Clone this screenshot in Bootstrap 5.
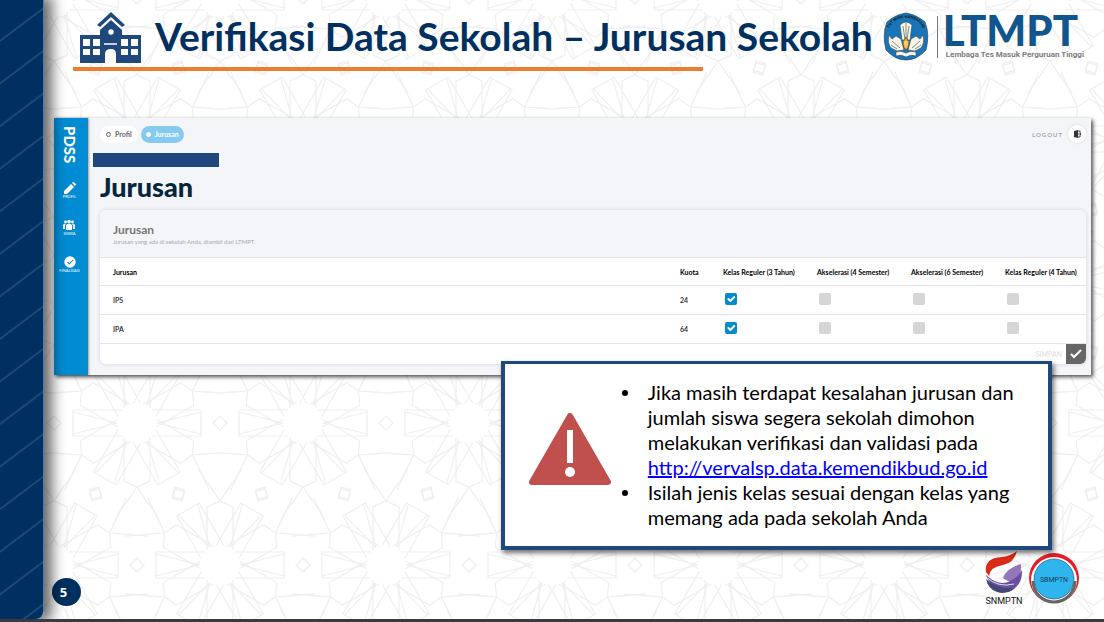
<!DOCTYPE html>
<html lang="id">
<head>
<meta charset="utf-8">
<meta name="viewport" content="width=device-width, initial-scale=1">
<title>Verifikasi Data Sekolah – Jurusan Sekolah</title>
<link href="https://cdn.jsdelivr.net/npm/bootstrap@5.3.0/dist/css/bootstrap.min.css" rel="stylesheet">
<style>
  :root { --navy: #003060; --frame: #1f497d; --sky: #008bd2; }
  body { font-family: Lato, "Open Sans", sans-serif; color: #000; background: #fff; }
  .deck { border-bottom: 3px solid #3b3b3f; }
  .ornament { z-index: 0; }
  .rail { width: 44px; z-index: 2; border-right: 1px solid #4f7fb8; border-bottom-right-radius: 8px;
    background: repeating-linear-gradient(143deg, #003060 0 31px, #23507f 33px, #003060 34px);
    box-shadow: 4px 0 14px 4px rgba(0,0,0,.6); }
  .slide-body { z-index: 1; min-width: 0; }
  .slide-head { height: 118px; padding: 0 20px 0 29px; }
  .title-rule { width: 630px; max-width: 100%; height: 4px; background: #ed7d31; }
  .title-row { height: 67px; padding-left: 7px; }
  .slide-title { font-size: 39px; line-height: 48px; font-weight: 700; color: var(--navy); margin-left: 13px; }
  .school-icon { margin-top: 11px; }
  .ltmpt { border-left: 1px solid #777; padding-left: 8px; height: 42px; margin-left: 8px; }
  .ltmpt-name { font-size: 42px; line-height: 28px; margin-left: -3px; font-weight: 900; color: #10568c; }
  .ltmpt-sub { font: 700 8px/10px Roboto, sans-serif; color: #7d7d7d; padding-top: 6px; }

  .app { margin: 0 13px 0 10px; height: 257px; background: #f4f5f8; box-shadow: 2px 2px 4px rgba(0,0,0,.7); }
  .app-nav { width: 34px; background: var(--sky); box-shadow: 1px 0 2px rgba(0,0,0,.35); padding: 8px 3px 0 0; }
  .app-brand { writing-mode: vertical-rl; font-size: 15px; line-height: 16px; font-weight: 900; color: #fff; height: 40px; }
  .app-nav a { color: #fff; text-decoration: none; font-size: 4px; line-height: 6px; height: 37px; }
  .app-main { padding: 7px 5px 11px; min-width: 0; }
  .crumb { height: 17px; border-radius: 9px; font-size: 7px; font-weight: 700; color: #666; background: #fff; text-decoration: none; padding: 0 6px; gap: 4px; }
  .crumb.on { background: #86caef; color: #fff; padding: 0 5px; }
  .dot { width: 5px; height: 5px; border: 1px solid #666; border-radius: 50%; }
  .on .dot { border-color: #fff; background: #fff; }
  .crumbs { padding-left: 7px; gap: 3px; }
  .logout { font-size: 6px; letter-spacing: 1px; color: #888; gap: 5px; }
  .logout-disc { width: 18px; height: 18px; border-radius: 50%; background: #fff; box-shadow: 0 0 3px rgba(0,0,0,.12); }
  .school-mask { width: 126px; height: 14px; background: var(--frame); margin: 10px 0 5px; }
  .app-title { font-size: 27px; line-height: 30px; font-weight: 900; color: #05263c; margin: 0 0 8px 7px; }
  .panel { margin-left: 7px; border-radius: 6px; background: #fff; box-shadow: 0 0 4px rgba(0,0,0,.13); overflow: hidden; }
  .panel-top { height: 47px; padding: 13px 13px 0; background: #f4f5f9; }
  .panel-top h3 { font-size: 12px; line-height: 14px; font-weight: 700; color: #777; margin: 0; }
  .panel-top p { font-size: 6px; line-height: 10px; color: #aaa; margin: 0; }
  .kelas { table-layout: fixed; font-size: 7px; line-height: 10px; margin: 0; width: 100%; border-collapse: collapse; }
  .kelas tr { height: 29px; border-top: 1px solid #e4e4e6; }
  .kelas thead tr { height: 28px; }
  .kelas tbody { border-bottom: 1px solid #e4e4e6; }
  .kelas th, .kelas td { padding: 0; font-weight: 700; white-space: nowrap; vertical-align: middle; }
  .kelas td { font-weight: 600; color: #222; }
  .kelas th:first-child, .kelas td:first-child { padding-left: 13px; }
  .c-kuota { width: 43px; } .c-kelas { width: 94px; } .c-last { width: 81px; }
  .kelas .form-check-input { display: block; width: 12px; height: 12px; min-height: 0; margin: -3px 0 0 2px; border: 0; border-radius: 2px; background-color: #d6d6d6; }
  .kelas .form-check-input:checked { background-color: var(--sky); background-size: 13px; }
  .save { height: 20px; border: 0; background: transparent; font-size: 7px; color: #ddd; padding: 0; gap: 4px; }
  .save-tick { width: 20px; height: 20px; background: #666; }

  .notice { width: 52%; min-width: 530px; height: 189px; margin: -14px 52px 0 auto; border: 4px solid var(--frame); border-top-width: 3px; background: #fff; box-shadow: 2px 3px 5px rgba(0,0,0,.55); padding: 0 0 0 24px; z-index: 3; }
  .notice ul { font-size: 20px; line-height: 25px; padding-left: 26px; margin: 0 0 0 11px; list-style: none; }
  .notice li { position: relative; }
  .notice li::before { content: ""; position: absolute; left: -26px; top: 10px; width: 6px; height: 6px; border-radius: 50%; background: #000; }
  .notice a { color: #00f; }
  .warn { margin-bottom: 12px; }
  .slide-foot { padding: 0 25px 13px 8px; }
  .page-no { width: 29px; height: 28px; border-radius: 50%; background: var(--navy); color: #fff; font: 700 13px/28px "Open Sans", sans-serif; padding-right: 6px; }
  .marks { margin-top: -2px; gap: 5px; }
</style>
</head>
<body>
<div class="deck min-vh-100 d-flex position-relative overflow-hidden">
  <svg class="ornament position-absolute top-0 start-0 w-100 h-100" aria-hidden="true">
    <defs>
      <g id="petal"><path d="M15-13H64V13H15M20 0L64-11M20 0L64 11M76 0l7-7 7 7-7 7z"/></g>
      <g id="leaf"><path d="M15-13H58L64 0L58 13H15M64 0l18-12M64 0l18 12M64 0L96-22M64 0L96 22"/></g>
      <g id="rosette" fill="none" stroke="#efefef" stroke-width="1.2">
        <use href="#petal"/><use href="#petal" transform="rotate(60)"/><use href="#petal" transform="rotate(120)"/><use href="#petal" transform="rotate(180)"/><use href="#petal" transform="rotate(240)"/><use href="#petal" transform="rotate(300)"/>
        <use href="#leaf" transform="rotate(30)"/><use href="#leaf" transform="rotate(90)"/><use href="#leaf" transform="rotate(150)"/><use href="#leaf" transform="rotate(210)"/><use href="#leaf" transform="rotate(270)"/><use href="#leaf" transform="rotate(330)"/>
      </g>
      <pattern id="tiles" x="54" y="-3" width="166" height="284" patternUnits="userSpaceOnUse">
        <use href="#rosette" x="0" y="0"/><use href="#rosette" x="166" y="0"/><use href="#rosette" x="83" y="142"/><use href="#rosette" x="0" y="284"/><use href="#rosette" x="166" y="284"/>
      </pattern>
    </defs>
    <rect width="100%" height="100%" fill="url(#tiles)"/>
  </svg>

  <div class="rail flex-shrink-0 position-relative"></div>

  <main class="slide-body flex-fill d-flex flex-column position-relative">
    <header class="slide-head">
      <div class="title-row d-flex align-items-start">
        <svg class="school-icon flex-shrink-0" width="62" height="53" viewBox="0 0 62 53" aria-hidden="true">
          <path fill="#1f497d" d="M31 1L45 14L42 16L31 6L20 16L17 14ZM0 24H20V19L31 9L42 19V24H61V52H36V43Q36 38 31 38Q25 38 25 43V52H0Z"/>
          <circle cx="31" cy="21" r="2.7" fill="#fff"/>
          <path stroke="#fff" stroke-width="1.5" d="M24 33H37"/>
          <g fill="#fff"><path d="M3 28h7v7H3zM13 28h7v7h-7zM3 38h7v6H3zM13 38h7v6h-7zM41 28h7v7h-7zM51 28h7v7h-7zM41 38h7v6h-7zM51 38h7v6h-7z"/></g>
        </svg>
        <h1 class="slide-title text-nowrap mb-0 mt-2 pt-1">Verifikasi Data Sekolah – Jurusan Sekolah</h1>
        <div class="d-flex align-items-center ms-auto mt-2 pt-1">
          <svg class="flex-shrink-0" width="46" height="49" viewBox="0 0 46 49" role="img" aria-label="Tut Wuri Handayani">
            <path d="M23 1Q34 3 42 10Q47 22 43 38Q34 48 23 48Q12 48 3 38Q-1 22 4 10Q12 3 23 1Z" fill="#1975b7" stroke="#204868" stroke-width=".7"/>
            <path id="arc" d="M5 21Q8 6 23 6Q38 6 41 21" fill="none"/>
            <text font-size="4" font-weight="700" font-family="Roboto, sans-serif" fill="#101820"><textPath href="#arc" startOffset="50%" text-anchor="middle">TUT WURI HANDAYANI</textPath></text>
            <g fill="#f8f4e7" stroke="#344a58" stroke-width=".6">
              <path d="M17 13Q23 7 29 13L27 28H19Z"/>
              <path d="M18 27L13 24L9 27L6 23Q4 31 8 36L14 39L21 38ZM28 27L33 24L37 27L40 23Q42 31 38 36L32 39L25 38Z"/>
              <path d="M13 40Q18 38 23 41Q28 38 33 40V44Q28 42 23 45Q18 42 13 44Z"/>
              <path d="M20 14L22 28M23 11V28M26 14L24 28M9 29L17 36M37 29L29 36M8 33l6 4M38 33l-6 4" fill="none"/>
            </g>
            <path d="M23 25Q29 33 23 38Q17 33 23 25Z" fill="#f0a329" stroke="#5b4a20" stroke-width=".7"/><path d="M20 29h6l-3 8z" fill="#fff3b0" opacity=".5"/>
          </svg>
          <div class="ltmpt">
            <div class="ltmpt-name">LTMPT</div>
            <div class="ltmpt-sub text-nowrap">Lembaga Tes Masuk Perguruan Tinggi</div>
          </div>
        </div>
      </div>
      <div class="title-rule"></div>
    </header>

    <section class="app d-flex">
      <nav class="app-nav d-flex flex-column align-items-center flex-shrink-0">
        <div class="app-brand mb-3">PDSS</div>
        <a href="#" class="d-flex flex-column align-items-center">
          <svg width="12" height="12" viewBox="0 0 12 12" fill="#fff"><path d="M0 12V9L7 2L10 5L3 12ZM8 1L9 0Q10 0 12 2Q12 3 11 4Z"/></svg>PROFIL</a>
        <a href="#" class="d-flex flex-column align-items-center">
          <svg width="12" height="12" viewBox="0 0 12 12" fill="#fff"><circle cx="6" cy="2.5" r="1.8"/><circle cx="2.5" cy="3" r="1.4"/><circle cx="9.500" cy="3" r="1.4"/><path d="M3 6Q6 3 9 6V11H3ZM0 6Q1 4 3 5L2 6V10H0ZM12 6Q11 4 9 5L10 6V10H12Z"/></svg>SISWA</a>
        <a href="#" class="d-flex flex-column align-items-center">
          <svg width="12" height="12" viewBox="0 0 12 12"><circle cx="6" cy="6" r="5.700" fill="#fff"/><path d="M3.500 6L5.300 8L9 4" fill="none" stroke="#008bd2" stroke-width="1.100"/></svg>FINALISASI</a>
      </nav>
      <div class="app-main flex-fill">
        <div class="crumbs d-flex align-items-center">
          <a href="#" class="crumb d-flex align-items-center"><span class="dot"></span>Profil</a>
          <a href="#" class="crumb on d-flex align-items-center"><span class="dot"></span>Jurusan</a>
          <a href="#" class="logout d-flex align-items-center ms-auto text-decoration-none">LOGOUT
            <span class="logout-disc d-flex align-items-center justify-content-center"><svg width="9" height="8" viewBox="0 0 9 8"><path d="M1 1L5 0V8L1 7Z" fill="#333"/><path d="M5 1H7V3M5 7H7V5M5 4H8M7 3L8 4L7 5" fill="none" stroke="#333" stroke-width=".9"/></svg></span></a>
        </div>
        <div class="school-mask"></div>
        <h2 class="app-title">Jurusan</h2>
        <div class="panel">
          <div class="panel-top"><h3>Jurusan</h3><p>Jurusan yang ada di sekolah Anda, diambil dari LTMPT.</p></div>
          <table class="kelas">
            <colgroup><col><col class="c-kuota"><col class="c-kelas"><col class="c-kelas"><col class="c-kelas"><col class="c-last"></colgroup>
            <thead><tr><th>Jurusan</th><th>Kuota</th><th>Kelas Reguler (3 Tahun)</th><th>Akselerasi (4 Semester)</th><th>Akselerasi (6 Semester)</th><th>Kelas Reguler (4 Tahun)</th></tr></thead>
            <tbody>
              <tr><td>IPS</td><td>24</td>
                <td><input class="form-check-input" type="checkbox" checked aria-label="IPS Kelas Reguler (3 Tahun)"></td>
                <td><input class="form-check-input" type="checkbox" aria-label="IPS Akselerasi (4 Semester)"></td>
                <td><input class="form-check-input" type="checkbox" aria-label="IPS Akselerasi (6 Semester)"></td>
                <td><input class="form-check-input" type="checkbox" aria-label="IPS Kelas Reguler (4 Tahun)"></td></tr>
              <tr><td>IPA</td><td>64</td>
                <td><input class="form-check-input" type="checkbox" checked aria-label="IPA Kelas Reguler (3 Tahun)"></td>
                <td><input class="form-check-input" type="checkbox" aria-label="IPA Akselerasi (4 Semester)"></td>
                <td><input class="form-check-input" type="checkbox" aria-label="IPA Akselerasi (6 Semester)"></td>
                <td><input class="form-check-input" type="checkbox" aria-label="IPA Kelas Reguler (4 Tahun)"></td></tr>
            </tbody>
          </table>
          <button type="button" class="save d-flex align-items-center ms-auto">SIMPAN
            <span class="save-tick d-flex align-items-center justify-content-center"><svg width="12" height="10" viewBox="0 0 12 10"><path d="M1 5L4 8L11 1" fill="none" stroke="#fff" stroke-width="2"/></svg></span></button>
        </div>
      </div>
    </section>

    <section class="notice position-relative d-flex align-items-center">
      <svg class="warn flex-shrink-0" width="82" height="73" viewBox="0 0 82 73" role="img" aria-label="Peringatan">
        <path d="M41 3L79 69H3Z" fill="#c0504d" stroke="#c0504d" stroke-width="6" stroke-linejoin="round"/>
        <path d="M38 17H44V50H38Z" fill="#fff"/><circle cx="41" cy="59" r="5" fill="#fff"/>
      </svg>
      <ul>
        <li>Jika masih terdapat kesalahan jurusan dan<br>jumlah siswa segera sekolah dimohon<br>melakukan verifikasi dan validasi pada<br><a href="http://vervalsp.data.kemendikbud.go.id">http://vervalsp.data.kemendikbud.go.id</a></li>
        <li>Isilah jenis kelas sesuai dengan kelas yang<br>memang ada pada sekolah Anda</li>
      </ul>
    </section>

    <footer class="slide-foot d-flex align-items-end justify-content-between mt-auto">
      <div class="page-no text-center">5</div>
      <div class="marks d-flex align-items-end">
        <svg width="40" height="56" viewBox="0 0 40 56" role="img" aria-label="SNMPTN">
          <path d="M2 22Q0 8 18 7Q27 6 33 1Q30 13 19 15Q6 17 5 26Z" fill="#d92b15"/>
          <path d="M19 28Q22 18 37 14Q38 25 32 31Q25 33 19 28Z" fill="#9477b9"/>
          <path d="M2 25Q14 36 24 32Q33 29 38 20Q39 36 24 42Q8 42 2 25Z" fill="#6850a0"/>
          <path d="M2 29Q13 40 31 38Q23 45 13 42Q4 39 2 29Z" fill="#414876"/>
          <path d="M2 27Q14 38 30 34" fill="none" stroke="#fff" stroke-width=".8"/>
          <text x="20" y="54" text-anchor="middle" font-family="Roboto, sans-serif" font-size="9" fill="#111">SNMPTN</text>
        </svg>
        <svg width="50" height="54" viewBox="0 0 50 54" role="img" aria-label="SBMPTN">
          <circle cx="25" cy="26" r="25" fill="#e31e2b"/><circle cx="25" cy="28" r="23" fill="#fff"/>
          <path d="M4 29A21 21 0 0 0 46 29" fill="none" stroke="#666" stroke-width="3"/>
          <circle cx="25" cy="27" r="20" fill="#2fb5ee" stroke="#345" stroke-width=".6"/>
          <text x="25" y="30" text-anchor="middle" font-family="Roboto, sans-serif" font-size="7" fill="#123a55">SBMPTN</text>
        </svg>
      </div>
    </footer>
  </main>
</div>
<script src="https://cdn.jsdelivr.net/npm/bootstrap@5.3.0/dist/js/bootstrap.bundle.min.js"></script>
</body>
</html>
